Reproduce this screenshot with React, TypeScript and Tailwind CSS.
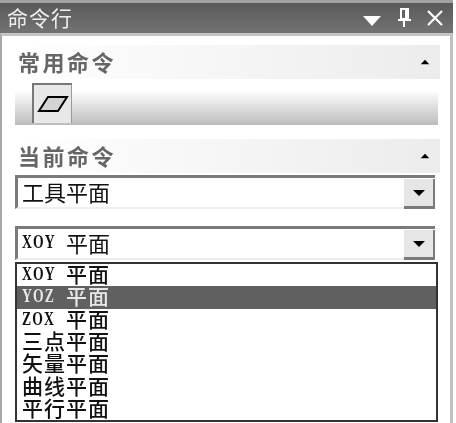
const cjk = '"Noto Sans CJK SC", sans-serif';

function Latin({ text }: { text: string }) {
  return (
    <span className="w-[44px] h-[22px] flex items-center">
      <span className="inline-block origin-left scale-x-[0.72] text-[19px] leading-none tracking-[1.5px] font-semibold font-['Liberation_Serif',serif]">{text}</span>
    </span>
  );
}

function Item({ latin, cjkText, selected }: { latin?: string; cjkText: string; selected?: boolean }) {
  return (
    <div
      className={`h-[22.3px] pl-[5px] pb-[3px] flex items-center whitespace-pre text-[21px] leading-none tracking-[1px] ${selected ? "bg-[#606060] text-[#e8e8e8]" : "text-[#111111]"}`}
    >
      {latin && <Latin text={latin} />}
      <span className="font-medium font-['Noto_Sans_CJK_SC',sans-serif]">{cjkText}</span>
    </div>
  );
}

function Arrow({ up, className }: { up?: boolean; className?: string }) {
  return (
    <svg width="14" height="8" viewBox="0 0 14 8" className={className}>
      <polygon points={up ? "7,1 13,7 1,7" : "1,1 13,1 7,7"} fill="currentColor" />
    </svg>
  );
}

function SectionHeader({ title }: { title: string }) {
  return (
    <div className="h-[34px] w-[425px] ml-[15px] pl-[3px] pr-[10px] flex items-center justify-between bg-gradient-to-r from-white to-[#ececec]">
      <span className="text-[22px] leading-none pb-[2px] font-bold text-[#666666] font-['Noto_Sans_CJK_SC',sans-serif] tracking-[2.5px]">{title}</span>
      <Arrow up className="text-black w-[10px] h-[6px]" />
    </div>
  );
}

function Combo({ children }: { children: React.ReactNode }) {
  return (
    <div className="ml-[15px] w-[420px] h-[34px] flex border-t-[3px] border-l-[3px] border-b-[2px] border-[#7a7a7a] border-b-[#eeeeee] bg-white">
      <div className="flex-1 pl-[4px] pb-[4px] flex items-center whitespace-pre text-[22px] leading-none text-[#111111]">{children}</div>
      <div className="w-[31px] mt-[1px] -mb-[2px] flex items-center justify-center bg-[#e6e6e6] border-b-[3px] border-r-[2px] border-[#7a7a7a]">
        <Arrow className="text-black" />
      </div>
    </div>
  );
}

export default function App() {
  return (
    <div className="w-[456px] h-[423px] overflow-hidden bg-white blur-[0.4px]" style={{ fontFamily: cjk }}>
      <div className="w-[453px] h-[33px] flex items-center justify-between pl-[7px] pr-[10px] border-t-[3px] border-[#a2a2a2] bg-gradient-to-b from-[#5a5a5a] to-[#737373] text-white">
        <span className="text-[21px] leading-none pb-[2px] tracking-[1px] text-[#eeeeee] font-['Noto_Sans_CJK_SC',sans-serif]">命令行</span>
        <div className="flex items-center gap-[16px]">
          <svg width="18" height="10" viewBox="0 0 18 10" className="mt-[6px]">
            <polygon points="0,0 18,0 9,10" fill="#ffffff" />
          </svg>
          <svg width="14" height="20" viewBox="0 0 14 20" fill="none" stroke="#ffffff" strokeWidth="2">
            <path d="M4 1h7v10H4zM9 1v10M1 12h13M7 12v7" />
          </svg>
          <svg width="16" height="16" viewBox="0 0 16 16" fill="none" stroke="#ffffff" strokeWidth="2.2">
            <path d="M1 1l14 14M15 1L1 15" />
          </svg>
        </div>
      </div>
      <div className="w-[453px] h-[390px] border-t-[3px] border-[#c4c4c4] border-l-[2px] border-l-[#a8a8a8] border-r-[3px] border-r-[#c0c0c0] bg-white">
        <div className="-ml-[2px]">
          <div className="h-[9px]" />
          <SectionHeader title="常用命令" />
          <div className="ml-[15px] w-[423px] h-[46px] pt-[4px] pl-[17px] bg-gradient-to-b from-white from-[25%] to-[#bcbcbc]">
            <div className="w-[40px] h-[40px] flex items-center justify-center bg-[#e8e8e8] border-t-2 border-l-2 border-[#777777] border-r border-r-[#999999]">
              <svg width="32" height="18" viewBox="0 0 32 18">
                <polygon points="11,2 30,2 21,16 2,16" fill="#d4d4d4" stroke="#000000" strokeWidth="2" />
              </svg>
            </div>
          </div>
          <div className="h-[14px]" />
          <SectionHeader title="当前命令" />
          <div className="h-[2px]" />
          <Combo>
            <span className="font-['Noto_Sans_CJK_SC',sans-serif]">工具平面</span>
          </Combo>
          <div className="h-[17px]" />
          <Combo>
            <Latin text="XOY" />
            <span className="font-['Noto_Sans_CJK_SC',sans-serif]">平面</span>
          </Combo>
          <div className="h-[2px]" />
          <div className="ml-[15px] w-[423px] h-[160px] border-2 border-[#333333] bg-white">
            <Item latin="XOY" cjkText="平面" />
            <Item latin="YOZ" cjkText="平面" selected />
            <Item latin="ZOX" cjkText="平面" />
            <Item cjkText="三点平面" />
            <Item cjkText="矢量平面" />
            <Item cjkText="曲线平面" />
            <Item cjkText="平行平面" />
          </div>
        </div>
      </div>
    </div>
  );
}
